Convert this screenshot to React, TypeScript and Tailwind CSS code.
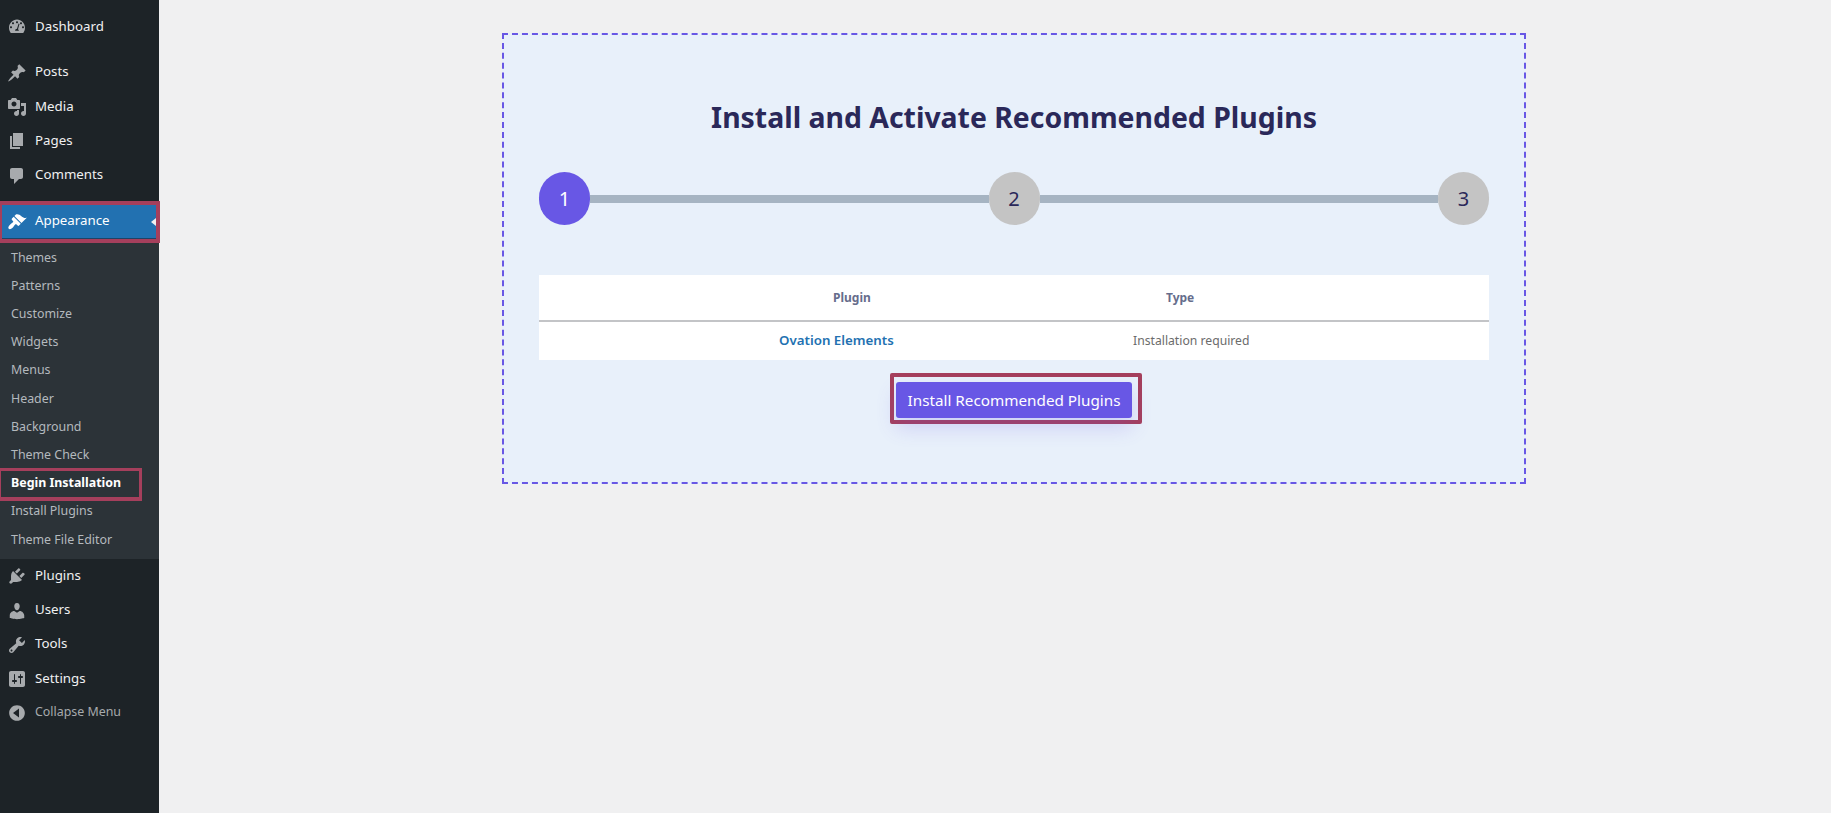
import type { ReactNode } from "react";

const icons: Record<string, ReactNode> = {
  dashboard: (
    <path
      fillRule="evenodd"
      d="M3.76 16h12.48C17.34 14.57 18 12.79 18 10.86 18 6.26 14.42 2.6 10 2.6S2 6.26 2 10.86c0 1.93.66 3.71 1.76 5.14zM10 4.26c.55 0 1 .45 1 1s-.45 1-1 1-1-.45-1-1 .45-1 1-1zM6 5.17c.55 0 1 .45 1 1 0 .56-.45 1-1 1s-1-.44-1-1c0-.55.45-1 1-1zm8 0c.55 0 1 .45 1 1 0 .56-.45 1-1 1s-1-.44-1-1c0-.55.45-1 1-1zM4 9.2c.55 0 1 .45 1 1s-.45 1-1 1-1-.45-1-1 .45-1 1-1zm12 0c.55 0 1 .45 1 1s-.45 1-1 1-1-.45-1-1 .45-1 1-1zM11.6 6.6l.9.3-1.5 5.3c.6.4.9 1 .9 1.6H8.1c0-1.1.9-2 1.9-2z"
    />
  ),
  posts: (
    <path d="M10.44 3.02l1.82-1.82 6.36 6.35-1.83 1.82c-1.05-.68-2.48-.57-3.41.36l-.75.75c-.92.93-1.04 2.35-.35 3.41l-1.83 1.82-2.41-2.41-2.8 2.79c-.42.42-3.38 2.71-3.8 2.29s1.86-3.39 2.28-3.81l2.79-2.79L4.1 9.36l1.83-1.82c1.05.69 2.48.57 3.4-.36l.75-.75c.93-.92 1.05-2.35.36-3.41z" />
  ),
  media: (
    <path
      fillRule="evenodd"
      d="M13 11V4c0-.55-.45-1-1-1h-1.67L9 1H5L3.67 3H2c-.55 0-1 .45-1 1v7c0 .55.45 1 1 1h10c.55 0 1-.45 1-1zM7 4.5c1.38 0 2.5 1.12 2.5 2.5S8.38 9.5 7 9.5 4.5 8.38 4.5 7 5.62 4.5 7 4.5zM14 6h5v10.5c0 1.38-1.12 2.5-2.5 2.5S14 17.88 14 16.5s1.12-2.5 2.5-2.5c.17 0 .34.02.5.05V9h-3V6zm-4 8.05V13h2v3.5c0 1.38-1.12 2.5-2.5 2.5S7 17.88 7 16.5 8.12 14 9.5 14c.17 0 .34.02.5.05z"
    />
  ),
  pages: <path d="M6 15V2h10v13H6zm-1 1h8v2H3V5h2v11z" />,
  comments: (
    <path d="M5 2h9c1.1 0 2 .9 2 2v7c0 1.1-.9 2-2 2h-2l-5 5v-5H5c-1.1 0-2-.9-2-2V4c0-1.1.9-2 2-2z" />
  ),
  appearance: (
    <path d="M14.48 11.06L7.41 3.99l1.5-1.5c.5-.56 2.3-.47 3.51.32 1.21.8 1.43 1.28 2.91 2.1 1.18.64 2.45 1.26 4.45.85zm-.71.71L6.7 4.7 4.93 6.47c-.39.39-.39 1.02 0 1.41l1.06 1.06c.39.39.39 1.03 0 1.42-.6.6-1.43 1.11-2.21 1.69-.35.26-.7.53-1.01.84-1.43 1.43-1.91 2.97-1.01 3.87s2.44.42 3.87-1.01c.31-.31.58-.66.84-1.01.58-.78 1.09-1.61 1.69-2.21.39-.39 1.03-.39 1.42 0l1.06 1.06c.39.39 1.02.39 1.41 0z" />
  ),
  plugins: (
    <path d="M13.11 4.36L9.87 7.6 8 5.73l3.24-3.24c.35-.34 1.05-.2 1.56.32.52.51.66 1.21.31 1.55zm-8 1.77l.91-1.12 9.01 9.01-1.19.84c-.71.71-2.63 1.16-3.82 1.16H6.14L4.9 17.26c-.59.59-1.54.59-2.12 0-.59-.58-.59-1.53 0-2.12l1.24-1.24v-3.88c0-1.13.4-3.19 1.09-3.89zm7.26 3.97l3.24-3.24c.34-.35 1.04-.21 1.55.31.52.51.66 1.21.31 1.55l-3.24 3.25z" />
  ),
  users: (
    <path d="M10 9.25c-2.27 0-2.73-3.44-2.73-3.44C7 4.02 7.82 2 9.97 2c2.16 0 2.98 2.02 2.71 3.81 0 0-.41 3.44-2.68 3.44zm0 2.57L12.72 10c2.39 0 4.52 2.33 4.52 4.53v2.49s-3.65 1.13-7.24 1.13c-3.65 0-7.24-1.13-7.24-1.13v-2.49c0-2.25 1.94-4.48 4.47-4.48z" />
  ),
  tools: (
    <path
      fillRule="evenodd"
      d="M16.68 9.77c-1.34 1.34-3.3 1.67-4.95.99l-5.41 6.52c-.99.99-2.59.99-3.58 0s-.99-2.59 0-3.57l6.52-5.42c-.68-1.65-.35-3.61.99-4.95 1.28-1.28 3.12-1.62 4.72-1.06l-2.89 2.89 2.82 2.82 2.86-2.87c.53 1.58.18 3.39-1.08 4.65zM3.81 16.21c.4.39 1.04.39 1.43 0 .4-.4.4-1.04 0-1.43-.39-.4-1.03-.4-1.43 0-.39.39-.39 1.03 0 1.43z"
    />
  ),
  settings: (
    <path
      fillRule="evenodd"
      d="M18 16V4c0-1.1-.9-2-2-2H4c-1.1 0-2 .9-2 2v12c0 1.1.9 2 2 2h12c1.1 0 2-.9 2-2zM8 11h1c.55 0 1 .45 1 1s-.45 1-1 1H8v1.5c0 .28-.22.5-.5.5s-.5-.22-.5-.5V13H6c-.55 0-1-.45-1-1s.45-1 1-1h1V5.5c0-.28.22-.5.5-.5s.5.22.5.5V11zm5-2h-1c-.55 0-1-.45-1-1s.45-1 1-1h1V5.5c0-.28.22-.5.5-.5s.5.22.5.5V7h1c.55 0 1 .45 1 1s-.45 1-1 1h-1v5.5c0 .28-.22.5-.5.5s-.5-.22-.5-.5V9z"
    />
  ),
  collapse: (
    <path
      fillRule="evenodd"
      d="M10 2.16c4.33 0 7.84 3.51 7.84 7.84S14.33 17.84 10 17.84 2.16 14.33 2.16 10 5.67 2.16 10 2.16zM12 14.5v-9L6 10z"
    />
  ),
};

function Dashicon({ name, className }: { name: string; className: string }) {
  return (
    <svg viewBox="0 0 20 20" fill="currentColor" className={`w-5 h-5 shrink-0 ${className}`}>
      {icons[name]}
    </svg>
  );
}

function MenuItem({ icon, label }: { icon: string; label: string }) {
  return (
    <li className="flex items-center h-[34.4px] pl-[7px] text-[13.3px] text-[#f0f0f1]">
      <Dashicon name={icon} className="text-[#a7aaad]" />
      <span className="ml-2 -mt-px">{label}</span>
    </li>
  );
}

const subItems = [
  "Themes",
  "Patterns",
  "Customize",
  "Widgets",
  "Menus",
  "Header",
  "Background",
  "Theme Check",
  "Begin Installation",
  "Install Plugins",
  "Theme File Editor",
];

function Sidebar() {
  return (
    <aside className="w-[159px] shrink-0 bg-[#1d2327] pt-[10px]">
      <ul>
        <MenuItem icon="dashboard" label="Dashboard" />
      </ul>
      <ul className="mt-[11px]">
        <MenuItem icon="posts" label="Posts" />
        <MenuItem icon="media" label="Media" />
        <MenuItem icon="pages" label="Pages" />
        <MenuItem icon="comments" label="Comments" />
      </ul>
      <div className="mt-[8px] h-[42px] w-40 border-4 border-l-2 border-[#a53f5c] bg-[#2271b1] shadow-[inset_0_-1px_0_#1d4468] flex items-center pl-[5px] text-[13.3px] text-white relative">
        <Dashicon name="appearance" className="text-white" />
        <span className="ml-2 -mt-[2px]">Appearance</span>
        <span className="absolute right-0 top-1/2 -translate-y-1/2 border-y-[4px] border-y-transparent border-r-[5px] border-r-[#f0f0f1]" />
      </div>
      <ul className="bg-[#2c3338] h-[316px] pt-px">
        {subItems.map((item) => {
          const active = item === "Begin Installation";
          return (
            <li
              key={item}
              className={`relative flex items-center h-[28.2px] pl-[11px] text-[12.4px] ${
                active ? "font-bold text-white" : "text-[#b4b9be]"
              }`}
            >
              {item}
              {active && (
                <span className="absolute left-0 -top-[1px] h-[33px] w-[142px] border-[3px] border-b-4 border-l border-[#a53f5c]" />
              )}
            </li>
          );
        })}
      </ul>
      <ul>
        <MenuItem icon="plugins" label="Plugins" />
        <MenuItem icon="users" label="Users" />
        <MenuItem icon="tools" label="Tools" />
        <MenuItem icon="settings" label="Settings" />
        <li className="flex items-center h-[32px] pl-[7px] text-[12.4px] text-[#a7aaad]">
          <Dashicon name="collapse" className="text-[#a7aaad]" />
          <span className="ml-2 -mt-px">Collapse Menu</span>
        </li>
      </ul>
    </aside>
  );
}

function Step({ n, active }: { n: number; active?: boolean }) {
  return (
    <div
      className={`w-[51px] h-[53px] rounded-full shrink-0 flex items-center justify-center text-[20px] ${
        active ? "bg-[#6857e5] text-white" : "bg-[#c4c4c4] text-[#2a2859]"
      }`}
    >
      {n}
    </div>
  );
}

export default function App() {
  return (
    <div className="flex min-h-screen bg-[#f0f0f1] font-['Noto_Sans',sans-serif]">
      <Sidebar />
      <main className="flex-1 pl-[343px] pt-[33px]">
        <div className="w-[1024px] h-[451px] border-2 border-dashed border-[#6857e5] bg-[#e8f0fa] px-[35px]">
          <h1 className="mt-[62px] text-center text-[28.4px] leading-[40px] font-bold text-[#2a2859]">
            Install and Activate Recommended Plugins
          </h1>
          <div className="mt-[35px] flex items-center">
            <Step n={1} active />
            <div className="flex-1 h-2 bg-[#a6b4c2]" />
            <Step n={2} />
            <div className="flex-1 h-2 bg-[#a6b4c2]" />
            <Step n={3} />
          </div>
          <div className="mt-[50px] bg-white">
            <div className="flex items-center h-[47px] pl-[294px] border-b-2 border-[#c3c4c7] text-[12px] font-bold text-[#666d8c]">
              <div className="w-[333px]">Plugin</div>
              <div>Type</div>
            </div>
            <div className="flex items-center h-[38px] pl-[240px]">
              <a className="w-[354px] text-[13.3px] font-semibold text-[#2271b1]">Ovation Elements</a>
              <span className="text-[12.2px] text-[#6b6b6b]">Installation required</span>
            </div>
          </div>
          <div className="mt-[13px] flex justify-center">
            <div className="ml-[4px] rounded-[2px] border-4 border-[#a53f5c] pt-[5px] pb-[2px] pl-[2px] pr-[6px]">
              <button className="h-[36px] w-[236px] rounded-[3px] bg-[#6857e5] text-[15.25px] text-white shadow-[0_10px_20px_rgba(104,87,229,0.2)]">
                Install Recommended Plugins
              </button>
            </div>
          </div>
        </div>
      </main>
    </div>
  );
}
